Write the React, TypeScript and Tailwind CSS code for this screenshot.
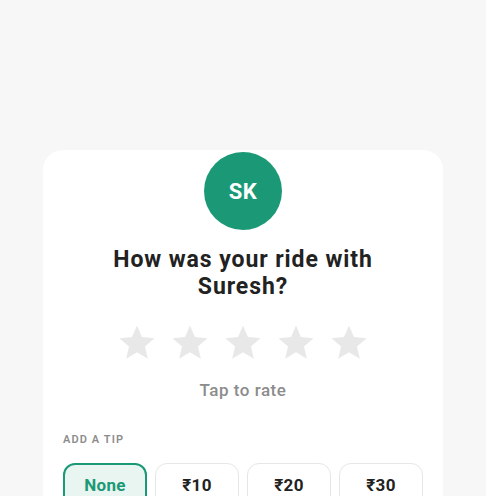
const tips = ["None", "₹10", "₹20", "₹30"];

function StarIcon() {
  return (
    <svg viewBox="0 0 24 24" className="w-[42px] h-[42px]" fill="#e8e8e8">
      <path d="M12 17.27L18.18 21l-1.64-7.03L22 9.24l-7.19-.61L12 2 9.19 8.63 2 9.24l5.46 4.73L5.82 21z" />
    </svg>
  );
}

export default function App() {
  const selected = "None";

  return (
    <div
      className="min-h-screen bg-[#f7f7f7] pt-[150px] flex justify-center"
      style={{ fontFamily: "Roboto, 'Liberation Sans', sans-serif" }}
    >
      <div className="w-[400px] bg-white rounded-t-[20px] px-5 pt-[2px] pb-8">
        {/* Avatar */}
        <div className="mx-auto w-[78px] h-[78px] rounded-full bg-[#1b9977] flex items-center justify-center text-white text-[22px] font-bold tracking-[0.02em]">
          SK
        </div>

        {/* Title */}
        <h1 className="mt-4 mx-auto max-w-[300px] text-center text-[23px] leading-[27px] font-bold tracking-[0.04em] text-[#222222]">
          How was your ride with Suresh?
        </h1>

        {/* Stars */}
        <div className="mt-[22px] flex justify-center gap-[11px]">
          {[1, 2, 3, 4, 5].map((n) => (
            <button key={n} aria-label={`${n} star`}>
              <StarIcon />
            </button>
          ))}
        </div>

        <p className="mt-[14px] text-center text-[17px] leading-6 font-medium tracking-[0.03em] text-[#8c8c8c]">
          Tap to rate
        </p>

        {/* Tip */}
        <p className="mt-[30px] text-[11px] leading-4 font-semibold tracking-[0.1em] text-[#8c8c8c]">
          ADD A TIP
        </p>
        <div className="mt-[15px] grid grid-cols-4 gap-2">
          {tips.map((t) =>
            t === selected ? (
              <button
                key={t}
                className="h-[46px] rounded-[12px] border-2 border-[#1b9977] bg-[#e8f5f1] text-[#1b9977] text-[17px] font-bold tracking-[0.02em]"
              >
                {t}
              </button>
            ) : (
              <button
                key={t}
                className="h-[46px] rounded-[12px] border-[1.5px] border-[#e6e6e6] bg-white text-[#222222] text-[17px] font-bold tracking-[0.02em]"
              >
                {t}
              </button>
            )
          )}
        </div>
      </div>
    </div>
  );
}
